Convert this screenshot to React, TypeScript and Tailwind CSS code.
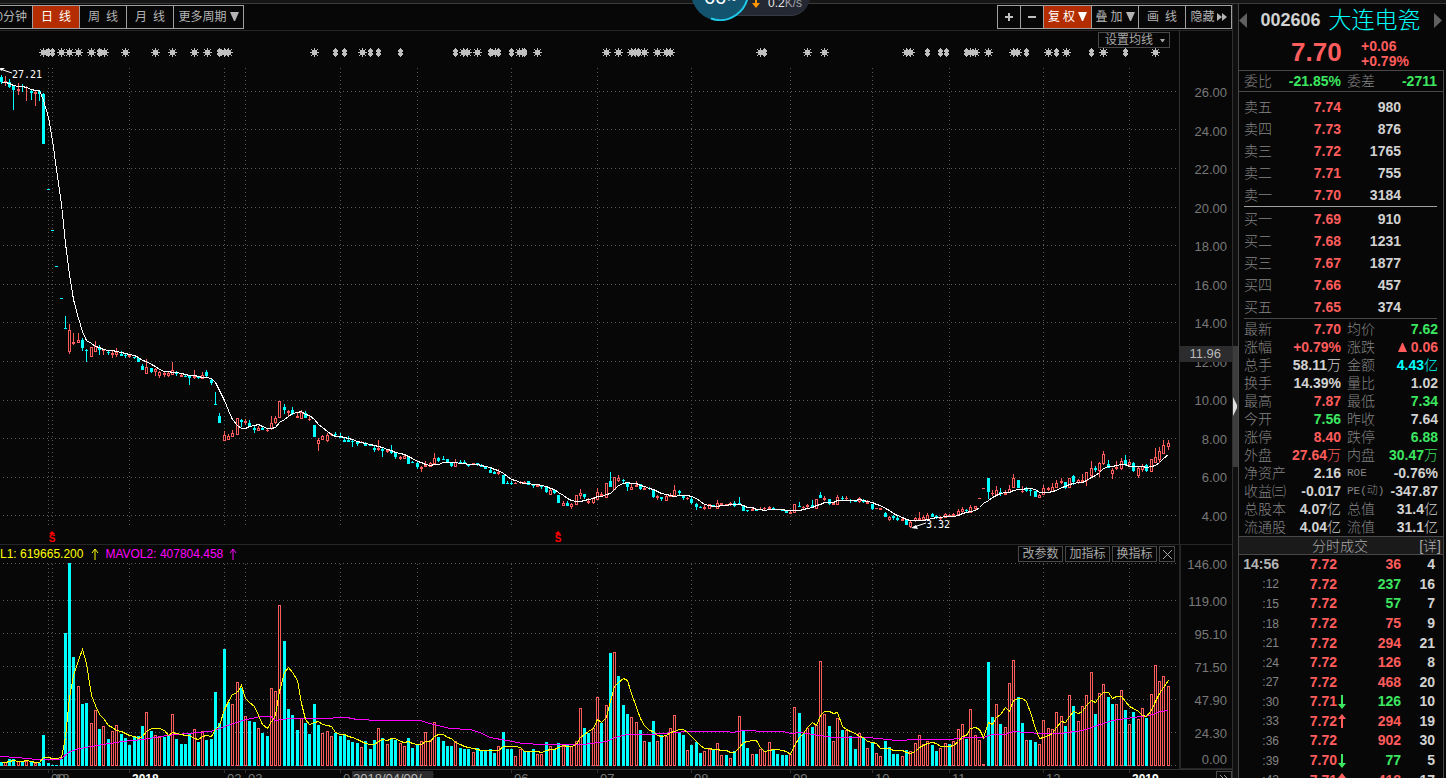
import { ReactNode } from 'react';
import clsx from 'clsx';

// one record per trading day: kind high top bottom low volume
// c = down day, r = up day, d = flat dash
// m = up candle with a down-coloured volume bar, n = the other way round
const RAW = `
c 75 77 82 84 4|r 76 81 82 86 4|c 79 82 87 88 7|c 86 86 90 110 7|r 83 89 91 95 5|c 84 86 87 92 4|r 86 87 88 101 5|c 90 91 93 100 4|r 91 92 94 106 3|c 91 91 94 101 3
c 93 94 144 144 31|c 189 189 189 189 3|c 230 230 230 230 1|c 266 266 266 266 1|c 298 298 298 298 7|c 316 328 329 329 133|m 324 330 352 354 203|m 333 342 344 345 109|r 333 340 343 343 80|c 338 340 348 351 62
c 349 350 351 362 63|r 347 347 357 357 43|r 341 346 352 352 56|c 345 347 350 355 37|r 349 350 351 355 40|c 350 352 353 355 27|r 350 353 355 358 35|r 348 352 355 357 41|c 351 354 356 356 32|c 353 355 356 358 28
m 355 355 357 358 21|c 357 357 358 359 30|c 357 358 362 362 30|c 364 366 370 370 40|r 359 367 374 374 54|c 368 368 372 373 35|r 368 369 372 376 31|r 371 372 376 378 29|m 372 373 375 377 29|m 371 373 376 377 30
r 362 370 375 375 52|c 371 372 374 376 27|m 373 375 377 377 22|c 374 376 377 377 22|c 376 376 378 385 32|r 370 376 378 379 37|c 376 377 378 379 24|r 372 375 379 379 35|c 370 372 376 377 26|c 378 380 383 385 27
c 392 404 405 405 74|c 413 416 423 423 43|m 431 435 441 441 117|m 434 436 440 440 64|r 430 433 437 437 62|r 418 418 435 435 84|c 419 420 422 427 78|r 419 421 423 425 50|c 420 423 426 426 45|c 426 428 430 433 44
r 426 428 431 431 38|c 426 428 430 430 33|m 428 430 431 432 30|r 416 423 429 430 78|r 416 418 423 424 75|r 401 401 418 418 161|c 404 407 410 414 125|m 410 411 413 416 57|c 407 410 414 415 51|m 412 416 418 418 36
r 410 412 419 419 48|c 411 413 418 418 43|m 416 419 420 421 32|c 425 425 437 437 62|m 438 440 444 451 41|r 435 436 440 440 33|r 433 435 441 442 35|r 433 434 435 436 30|c 432 434 435 436 33|c 433 436 438 438 30
c 437 440 442 442 31|c 436 440 442 442 26|c 439 441 442 447 24|c 441 442 444 446 23|r 441 442 443 443 19|c 442 443 446 446 25|c 444 445 446 446 17|c 446 448 450 452 26|r 440 448 450 451 38|c 447 449 451 457 28
r 449 450 452 453 22|c 445 451 453 454 27|c 452 453 457 459 26|r 456 457 459 460 23|r 454 456 459 459 20|c 456 456 464 464 28|c 461 462 463 463 18|c 462 463 467 469 21|r 466 467 469 472 25|r 461 465 467 467 34
r 462 463 467 467 26|r 453 458 464 464 44|c 457 458 461 462 29|c 456 459 460 460 25|c 459 459 463 463 20|c 462 463 466 467 20|r 459 462 467 467 25|c 460 462 464 464 18|c 460 462 464 464 17|c 464 464 466 467 17
r 463 463 465 465 14|c 463 463 465 466 18|c 464 465 467 467 16|c 467 467 469 469 16|c 468 470 473 473 17|c 471 472 474 474 13|r 469 472 474 475 20|c 475 475 484 484 34|c 481 483 484 484 17|c 481 483 484 485 17
r 482 483 484 484 10|r 481 482 483 484 17|m 481 482 483 483 15|c 481 481 485 485 14|c 485 485 486 488 17|r 485 485 487 487 12|n 486 486 487 489 12|c 486 487 492 493 24|r 488 490 495 495 20|c 489 490 493 494 17
c 495 495 503 503 23|r 501 503 506 506 20|c 501 503 506 506 21|r 503 504 507 509 20|r 495 495 505 505 25|r 489 493 496 499 58|c 494 494 497 499 38|m 498 501 503 504 33|r 497 498 503 504 38|r 488 492 500 500 69
m 492 494 496 496 43|r 483 483 498 498 61|c 472 481 487 487 113|r 477 477 490 490 114|m 475 478 481 482 90|c 479 480 481 484 61|c 482 483 487 491 52|r 483 487 490 490 49|r 481 485 487 487 44|c 484 484 489 490 36
r 487 488 490 490 25|c 487 488 489 490 24|c 489 489 497 498 45|r 495 496 498 500 25|c 497 497 499 501 31|r 494 496 501 501 30|r 493 495 497 497 38|r 485 490 496 496 51|c 490 491 493 495 33|c 495 496 498 500 31
r 497 498 499 500 16|c 497 499 503 504 21|c 503 504 507 510 24|c 506 507 508 508 13|r 505 507 509 510 15|r 504 504 509 509 17|c 505 505 507 507 16|r 500 503 509 509 23|r 503 503 505 505 11|m 504 504 505 505 11
r 502 503 505 506 8|c 501 503 506 507 15|n 497 503 504 505 50|c 506 506 511 511 36|c 510 510 511 512 18|r 508 509 511 511 12|c 509 509 511 511 12|r 507 509 510 510 17|r 507 508 509 510 15|r 506 507 509 509 24
c 507 508 509 509 16|c 509 509 510 510 12|c 510 510 511 511 11|c 511 511 513 513 11|r 511 512 514 514 12|r 504 504 513 513 59|c 502 506 507 507 53|m 506 507 508 509 32|r 504 505 507 508 38|c 500 505 507 507 39
r 499 499 509 509 41|n 492 495 498 498 105|r 496 498 500 501 52|c 499 499 504 505 40|r 502 503 505 505 25|r 495 497 505 505 48|c 496 498 499 500 36|r 496 498 499 500 36|c 499 500 501 503 30|c 500 501 502 502 17
r 497 498 502 503 33|c 499 500 502 503 28|r 500 502 504 504 18|c 504 504 509 510 23|r 508 508 509 509 13|r 508 508 510 510 10|c 512 513 517 517 25|m 516 517 520 521 19|c 515 516 518 520 12|c 516 518 520 521 12
r 518 519 521 521 10|c 519 520 525 525 16|r 521 522 527 528 15|r 517 518 521 522 23|r 512 518 520 520 31|r 515 517 520 520 22|r 513 515 520 521 25|c 513 514 517 517 21|c 515 516 518 519 15|r 516 517 519 520 18
r 513 514 518 518 23|m 514 515 516 517 22|r 513 514 516 516 25|r 509 511 515 515 37|r 507 509 512 514 42|c 509 510 511 512 27|r 505 507 513 513 57|r 506 506 509 510 31|d 498 498 498 498 26|d 488 488 488 488 2
c 478 478 492 499 104|m 490 493 494 496 49|r 486 490 495 495 62|c 488 492 494 496 42|r 490 493 495 495 39|r 485 489 493 493 83|r 474 478 488 488 106|c 480 480 488 488 69|m 486 491 492 493 43|n 487 489 491 492 26
c 488 490 491 496 26|c 491 491 497 497 24|r 494 495 498 498 22|r 485 488 495 495 46|r 487 488 490 491 38|r 483 487 492 492 37|r 480 483 488 488 54|r 478 481 483 484 50|c 482 482 488 489 40|r 478 478 488 488 71
c 475 476 482 485 60|r 479 480 483 484 45|r 474 480 482 483 60|r 472 472 481 486 71|r 461 468 476 477 94|c 466 468 470 472 52|r 462 463 471 477 73|r 451 454 464 465 82|c 460 464 468 468 69|m 468 470 474 479 62
r 461 467 469 470 62|r 458 461 469 470 76|c 455 460 465 466 56|r 459 462 465 466 42|c 462 463 471 472 54|r 466 468 476 478 47|r 464 466 470 472 58|c 464 465 471 472 48|r 459 459 472 472 72|r 448 457 463 463 101
r 447 451 460 463 85|r 440 445 454 454 90|r 440 443 447 450 80`;

const days = RAW.trim().split(/[\n|]/).map((rec, i) => {
  const [kind, ...n] = rec.split(' ');
  const [high, top, bottom, low, vol] = n.map(Number);
  const up = kind !== 'c' && kind !== 'n';
  return { x: Math.floor(1 + 4.2915 * i), kind, up, high, top, bottom, low, vol, close: up ? top : bottom };
});

function average(values: number[], size: number) {
  return values.map((_, i) => {
    const part = values.slice(Math.max(0, i - size + 1), i + 1);
    return part.reduce((a, b) => a + b, 0) / part.length;
  });
}

const VOL_BASE = 766;
const RED = '#ff5c5c';
const CYAN = '#00ffff';

const priceLine = average(days.map((d) => d.close), 6)
  .map((y, i) => `${days[i].x + 0.5},${Math.round(y) + 0.5}`)
  .join(' ');
const volLine = average(days.map((d) => d.vol), 5)
  .map((v, i) => `${days[i].x + 0.5},${VOL_BASE - Math.round(v) + 0.5}`)
  .join(' ');
const LONG_VOL_LINE =
  '0,756 17,757 37,759 60,759 70,751 80,748 97,745 122,741 143,739 167,735 187,733 210,731 220,728 230,724 243,720 260,716 271,716 275,720 290,718 330,718 337,717 347,717 357,719 380,720 420,720 430,723 450,728 470,729 480,732 490,737 507,740 523,743 543,744 583,744 607,741 615,737 627,734 650,734 687,731 727,731 733,732 742,730 755,730 757,731 783,731 791,733 800,732 813,734 833,737 868,737 897,740 917,739 950,739 967,737 983,737 993,734 1005,734 1013,731 1027,732 1040,733 1060,733 1083,730 1100,724 1113,720 1133,717 1150,715 1160,711 1168,710';

const MONTH_X = [48, 52, 129, 224, 245, 340, 417, 511, 597, 691, 790, 872, 949, 1043, 1129];
const PRICE_Y = [91, 129, 168, 207, 245, 284, 322, 361, 400, 438, 477, 515];
const VOLUME_Y = [563, 600, 633, 666, 699, 732, 765];

const STARS = [43, 61, 69, 78, 91, 104, 125, 155, 172, 194, 207, 224, 228, 314, 362, 463, 467, 477, 495, 519, 522, 537, 606, 618, 631, 635, 644, 657, 666, 670, 760, 807, 824, 906, 910, 970, 975, 988, 1013, 1017, 1048, 1066, 1103, 1155];
const PILLS = [48, 52, 99, 219, 335, 344, 370, 378, 400, 455, 490, 498, 511, 524, 638, 764, 927, 940, 946, 966, 1026, 1056, 1091, 1125];

const PRICE_LABELS = ['26.00', '24.00', '22.00', '20.00', '18.00', '16.00', '14.00', '12.00', '10.00', '8.00', '6.00', '4.00'];

const DATES = [
  { x: 51, text: '09' },
  { x: 55, text: '12' },
  { x: 132, text: '2018', year: true },
  { x: 227, text: '02' },
  { x: 248, text: '03' },
  { x: 343, text: '04' },
  { x: 420, text: '05' },
  { x: 514, text: '06' },
  { x: 600, text: '07' },
  { x: 694, text: '08' },
  { x: 793, text: '09' },
  { x: 875, text: '10' },
  { x: 952, text: '11' },
  { x: 1046, text: '12' },
  { x: 1132, text: '2019', year: true },
];

const SELLS = [
  ['卖五', '7.74', '980'],
  ['卖四', '7.73', '876'],
  ['卖三', '7.72', '1765'],
  ['卖二', '7.71', '755'],
  ['卖一', '7.70', '3184'],
];
const BUYS = [
  ['买一', '7.69', '910'],
  ['买二', '7.68', '1231'],
  ['买三', '7.67', '1877'],
  ['买四', '7.66', '457'],
  ['买五', '7.65', '374'],
];

type Tone = 'r' | 'g' | 'w' | 'c';
const TONES: Record<Tone, string> = {
  r: 'text-[#ff5c5c]',
  g: 'text-[#3ce660]',
  w: 'text-[#d2d2d2]',
  c: 'text-[#00ffff]',
};

const DETAILS: [string, string, Tone, string, string, Tone][] = [
  ['最新', '7.70', 'r', '均价', '7.62', 'g'],
  ['涨幅', '+0.79%', 'r', '涨跌', '▲0.06', 'r'],
  ['总手', '58.11万', 'w', '金额', '4.43亿', 'c'],
  ['换手', '14.39%', 'w', '量比', '1.02', 'w'],
  ['最高', '7.87', 'r', '最低', '7.34', 'g'],
  ['今开', '7.56', 'g', '昨收', '7.64', 'w'],
  ['涨停', '8.40', 'r', '跌停', '6.88', 'g'],
  ['外盘', '27.64万', 'r', '内盘', '30.47万', 'g'],
  ['净资产', '2.16', 'w', 'ROE', '-0.76%', 'w'],
  ['收益㈢', '-0.017', 'w', 'PE(动)', '-347.87', 'w'],
  ['总股本', '4.07亿', 'w', '总值', '31.4亿', 'w'],
  ['流通股', '4.04亿', 'w', '流值', '31.1亿', 'w'],
];

const TICKS: [string, string, '' | 'up' | 'down', string, Tone, string][] = [
  ['14:56', '7.72', '', '36', 'r', '4'],
  [':12', '7.72', '', '237', 'g', '16'],
  [':15', '7.72', '', '57', 'g', '7'],
  [':18', '7.72', '', '75', 'r', '9'],
  [':21', '7.72', '', '294', 'r', '21'],
  [':24', '7.72', '', '126', 'r', '8'],
  [':27', '7.72', '', '468', 'r', '20'],
  [':30', '7.71', 'down', '126', 'g', '10'],
  [':33', '7.72', 'up', '294', 'r', '19'],
  [':36', '7.72', '', '902', 'r', '30'],
  [':39', '7.70', 'down', '77', 'g', '5'],
  [':42', '7.71', 'up', '418', 'r', '17'],
];

function ToolButton({ children, className, active }: { children: ReactNode; className: string; active?: boolean }) {
  return (
    <button
      className={clsx(
        '-ml-px flex h-6 shrink-0 items-center border border-[#a0a0a0] text-xs whitespace-nowrap',
        active ? 'bg-[#b32d00] text-white' : 'text-[#b4b4b4]',
        className
      )}
    >
      {children}
    </button>
  );
}

function Caret() {
  return (
    <svg width="9" height="10" viewBox="0 0 9 10" fill="currentColor" aria-hidden="true">
      <path d="M0 0h9L5 9H4z" />
    </svg>
  );
}

function Toolbar() {
  return (
    <div className="flex h-[27px] shrink-0 justify-between border-b border-[#262626] pt-px">
      <div className="flex">
        <ToolButton className="w-[34px] justify-end pr-[5px]">0分钟</ToolButton>
        <ToolButton className="w-12 justify-center gap-[6px]" active><span>日</span><span>线</span></ToolButton>
        <ToolButton className="w-12 justify-center gap-[6px]"><span>周</span><span>线</span></ToolButton>
        <ToolButton className="w-12 justify-center gap-[6px]"><span>月</span><span>线</span></ToolButton>
        <ToolButton className="w-[71px] justify-center gap-[3px]">更多周期<Caret /></ToolButton>
      </div>
      <div className="flex">
        <ToolButton className="w-6 justify-center">
          <svg width="8" height="8" viewBox="0 0 8 8" aria-label="放大"><path d="M3 0h2v3h3v2H5v3H3V5H0V3h3z" fill="#c0c0c0" /></svg>
        </ToolButton>
        <ToolButton className="w-6 justify-center">
          <svg width="8" height="8" viewBox="0 0 8 8" aria-label="缩小"><path d="M0 3h8v2H0z" fill="#c0c0c0" /></svg>
        </ToolButton>
        <ToolButton className="w-[49px] justify-center gap-[3px]" active><span>复</span><span>权</span><Caret /></ToolButton>
        <ToolButton className="w-12 justify-center gap-[3px]"><span>叠</span><span>加</span><Caret /></ToolButton>
        <ToolButton className="w-12 justify-center gap-[6px]"><span>画</span><span>线</span></ToolButton>
        <ToolButton className="w-[47px] justify-center gap-[2px]">
          隐藏
          <svg width="10" height="8" viewBox="0 0 10 8" fill="currentColor" aria-hidden="true"><path d="M0 0l5 4-5 4zM5 0l5 4-5 4z" /></svg>
        </ToolButton>
      </div>
    </div>
  );
}

function Grid({ rows, top, bottom }: { rows: number[]; top: number; bottom: number }) {
  return (
    <g stroke="#585858" strokeDasharray="1 3" shapeRendering="crispEdges">
      {rows.map((y) => <line key={y} x1="3" x2="1179" y1={y + 0.5} y2={y + 0.5} />)}
      {MONTH_X.map((x) => <line key={x} x1={x + 0.5} x2={x + 0.5} y1={top} y2={bottom} />)}
    </g>
  );
}

function BuyMark({ x }: { x: number }) {
  return (
    <g fill="#ff0000">
      <path d={`M${x - 3} 534l3-3 3 3z`} />
      <text x={x} y="542" textAnchor="middle" className="text-[10px] font-bold">S</text>
    </g>
  );
}

function PriceChart() {
  return (
    <svg viewBox="0 31 1179 513" className="block w-full" role="img" aria-label="日K线">
      <Grid rows={PRICE_Y} top={68} bottom={526} />
      <g fill="#c0c0c0" stroke="#c0c0c0" shapeRendering="crispEdges">
        {STARS.map((x) => (
          <g key={x}>
            <rect x={x - 2} y="50" width="5" height="5" stroke="none" />
            <path d={`M${x - 4} 52.5h9M${x + 0.5} 48v9`} />
            <path d={`M${x - 3} 49h1v1h-1zM${x + 3} 49h1v1h-1zM${x - 3} 55h1v1h-1zM${x + 3} 55h1v1h-1z`} stroke="none" />
          </g>
        ))}
        {PILLS.map((x) => (
          <path key={x} d={`M${x} 48h1v1h1v1h1v2h-1v1h1v2h-1v1h-1v1h-1v-1h-1v-1h-1v-2h1v-1h-1v-2h1v-1h1z`} stroke="none" />
        ))}
      </g>
      <g shapeRendering="crispEdges">
        {days.map((d) => {
          const color = d.up ? RED : CYAN;
          const flat = d.bottom - d.top < 3;
          return (
            <g key={d.x} fill={color}>
              {d.high < d.top && <rect x={d.x} y={d.high} width="1" height={d.top - d.high} />}
              {d.low > d.bottom && <rect x={d.x} y={d.bottom} width="1" height={d.low - d.bottom} />}
              {d.up && !flat ? (
                <rect x={d.x - 0.5} y={d.top + 0.5} width="2" height={d.bottom - d.top - 1} fill="#070707" stroke={color} />
              ) : (
                <rect x={d.x - 1} y={d.top} width="3" height={Math.max(1, d.bottom - d.top)} />
              )}
            </g>
          );
        })}
      </g>
      <polyline points={priceLine} fill="none" stroke="#fff" shapeRendering="crispEdges" />
      <g stroke="#fff" fill="#fff">
        <path d="M0 69l12 4" fill="none" />
        <path d="M0 68h5l-4 3z" stroke="none" />
        <path d="M914 527l12-4" fill="none" />
        <path d="M911 528l5-3 2 4z" stroke="none" />
      </g>
      <g fill="#fff" className="font-['DejaVu_Sans_Mono',monospace] text-[10px]">
        <text x="12" y="78">27.21</text>
        <text x="926" y="528">3.32</text>
      </g>
      <BuyMark x={52} />
      <BuyMark x={558} />
    </svg>
  );
}

function VolumeChart() {
  return (
    <svg viewBox="0 562 1179 204" className="block w-full" role="img" aria-label="成交量">
      <Grid rows={VOLUME_Y} top={564} bottom={766} />
      <g shapeRendering="crispEdges">
        {days.map((d) =>
          d.kind === 'c' || d.kind === 'm' ? (
            <rect key={d.x} x={d.x - 1} y={VOL_BASE - d.vol} width="3" height={d.vol} fill={CYAN} />
          ) : (
            <rect key={d.x} x={d.x - 0.5} y={VOL_BASE - d.vol + 0.5} width="2" height={d.vol - 1} fill="#070707" stroke={RED} />
          )
        )}
      </g>
      <g fill="none" shapeRendering="crispEdges">
        <polyline points={LONG_VOL_LINE} stroke="#ff00ff" transform="translate(0 .5)" />
        <polyline points={volLine} stroke="#ffff00" />
      </g>
    </svg>
  );
}

function UpArrow() {
  return (
    <svg width="8" height="12" viewBox="0 0 8 12" fill="none" stroke="currentColor" aria-hidden="true">
      <path d="M4 12V1M1 5l3-4 3 4" />
    </svg>
  );
}

function SmallButton({ children, className }: { children: ReactNode; className: string }) {
  return (
    <button className={clsx('flex h-4 items-center justify-center border border-[#484848] text-xs leading-[14px] text-[#a8a8a8]', className)}>
      {children}
    </button>
  );
}

function Charts() {
  return (
    <section className="flex min-w-0 flex-1 flex-col border-r border-[#303030]">
      <Toolbar />
      <div className="flex shrink-0">
        <div className="relative min-w-0 flex-1">
          <PriceChart />
          <button className="absolute top-px right-[9px] flex h-4 w-[72px] items-center justify-between border border-[#484848] bg-[#070707] pr-1 pl-[6px] text-xs leading-[14px] text-[#a8a8a8]">
            设置均线
            <svg width="5" height="3" viewBox="0 0 5 3" fill="currentColor" aria-hidden="true"><path d="M0 0h5L3 3H2z" /></svg>
          </button>
        </div>
        <div className="relative w-[53px] border-l border-[#303030] pt-[54px] pr-[5px] text-right text-[13px] leading-4 text-[#787878]">
          <div className="flex h-[440px] flex-col justify-between">
            {PRICE_LABELS.map((t) => <div key={t}>{t}</div>)}
          </div>
          <div className="absolute inset-x-0 top-[315px] h-4 bg-[#2c2c2e] pr-[11px] text-[#b8b8b8]">11.96</div>
        </div>
      </div>

      <div className="flex shrink-0 border-t border-[#262626]">
        <div className="min-w-0 flex-1">
          <div className="flex h-[17px] justify-between">
            <div className="flex items-center text-xs whitespace-nowrap">
              <span className="text-[#ffff00]">L1: 619665.200</span>
              <span className="ml-2 text-[#ffff00]"><UpArrow /></span>
              <span className="ml-[6px] text-[#ff00ff]">MAVOL2: 407804.458</span>
              <span className="ml-[6px] text-[#ff00ff]"><UpArrow /></span>
            </div>
            <div className="flex gap-[2px] pt-px pr-1">
              <SmallButton className="w-[45px]">改参数</SmallButton>
              <SmallButton className="w-[45px]">加指标</SmallButton>
              <SmallButton className="w-[45px]">换指标</SmallButton>
              <SmallButton className="w-4">
                <svg width="9" height="9" viewBox="0 0 9 9" stroke="currentColor" aria-label="关闭"><path d="M0 0l9 9M9 0L0 9" /></svg>
              </SmallButton>
            </div>
          </div>
          <VolumeChart />
        </div>
        <div className="w-[53px] border-b border-l-2 border-[#262626] pt-3 pr-[5px] text-right text-[13px] leading-4 text-[#787878]">
          <div className="h-[37px]">146.00</div>
          <div className="h-[33px]">119.00</div>
          <div className="h-[33px]">95.10</div>
          <div className="h-[33px]">71.50</div>
          <div className="h-[33px]">47.90</div>
          <div className="h-[26px]">24.30</div>
          <div>0.00</div>
        </div>
      </div>

      <div className="flex shrink-0 border-t border-[#303030]">
        <div className="relative min-w-0 flex-1">
          <svg viewBox="0 767 1179 20" className="block w-full text-[13px]" role="img" aria-label="日期">
            {MONTH_X.map((x) => <rect key={x} x={x} y="767" width="1" height="3" fill="#303030" />)}
            {DATES.map((d) => (
              <text key={d.x} x={d.x} y="780" fill={d.year ? '#fff' : '#787878'} className={d.year ? 'text-xs font-bold' : ''}>{d.text}</text>
            ))}
          </svg>
          <div className="absolute top-px left-[352px] h-5 w-[81px] bg-[#2c2c2e] pl-px text-[13px] leading-4 whitespace-nowrap text-[#b8b8b8]">2018/04/09/一</div>
        </div>
        <div className="flex w-[53px] justify-end pt-px">
          <button className="flex h-5 w-4 justify-center border border-[#484848] pt-[3px] text-[#a0a0a0]" aria-label="更多">
            <svg width="9" height="8" viewBox="0 0 9 8" fill="none" stroke="currentColor"><path d="M0 0l4 4-4 4M4 0l4 4-4 4" /></svg>
          </button>
        </div>
      </div>
    </section>
  );
}

// digits stay bold, a trailing 万 / 亿 is drawn in the light weight
function Figure({ text }: { text: string }) {
  const unit = /[万亿]$/.test(text) ? text.slice(-1) : '';
  const arrow = text.startsWith('▲');
  const body = text.slice(arrow ? 1 : 0, unit ? -1 : undefined);
  return (
    <span className="font-bold">
      {arrow && (
        <svg width="9" height="9" viewBox="0 0 9 9" fill="currentColor" className="mr-1 inline-block align-baseline" aria-hidden="true"><path d="M4 0h1l4 9H0z" /></svg>
      )}
      {body}
      {unit && <span className="font-light">{unit}</span>}
    </span>
  );
}

function BookRows({ rows }: { rows: string[][] }) {
  return (
    <table className="w-full table-fixed text-sm leading-[22px]">
      <tbody>
        {rows.map(([label, price, qty]) => (
          <tr key={label} className="h-[22px]">
            <th scope="row" className="w-10 p-0 text-left font-light text-[#848484]">{label}</th>
            <td className="w-[57px] p-0 text-right font-bold text-[#ff5c5c]">{price}</td>
            <td className="p-0 pr-9 text-right font-bold text-[#d2d2d2]">{qty}</td>
          </tr>
        ))}
      </tbody>
    </table>
  );
}

function TickArrow({ dir }: { dir: 'up' | 'down' }) {
  return (
    <svg width="8" height="14" viewBox="0 0 8 14" fill="currentColor" className={dir === 'up' ? 'text-[#ff5c5c]' : 'text-[#3ce660]'} aria-hidden="true">
      <path d={dir === 'up' ? 'M4 0l4 5H5v9H3V5H0z' : 'M4 14l4-5H5V0H3v9H0z'} />
    </svg>
  );
}

function Quote() {
  return (
    <aside className="flex w-[208px] shrink-0 flex-col border-l border-[#484848]">
      <header className="h-[66px] shrink-0">
        <div className="flex h-8 items-center justify-between pr-1">
          <button aria-label="上一只"><svg width="8" height="15" viewBox="0 0 8 15" fill="#606060"><path d="M8 0v15L0 7.500z" /></svg></button>
          <h1 className="flex items-center gap-2 whitespace-nowrap">
            <span className="text-lg font-bold text-[#d2d2d2]">002606</span>
            <span className="text-[23px] leading-8 font-light text-[#00ffff]">大连电瓷</span>
          </h1>
          <button aria-label="下一只"><svg width="8" height="15" viewBox="0 0 8 15" fill="#606060"><path d="M0 0v15l8-7.500z" /></svg></button>
        </div>
        <div className="flex pl-[52px] text-[#ff5c5c]">
          <span className="w-[70px] text-[26px] leading-8 font-bold">7.70</span>
          <span className="flex flex-col pt-[3px] text-sm leading-[15px] font-bold">
            <span>+0.06</span>
            <span>+0.79%</span>
          </span>
        </div>
      </header>

      <div className="mr-[2px] flex flex-1 flex-col border-r border-[#484848]">
        <div className="flex h-[22px] shrink-0 items-center border-y border-[#484848] pr-[6px] pl-[5px] text-sm">
          <span className="w-10 font-light text-[#848484]">委比</span>
          <span className="w-[57px] text-right font-bold text-[#3ce660]">-21.85%</span>
          <span className="pl-[6px] font-light text-[#848484]">委差</span>
          <span className="flex-1 text-right font-bold text-[#3ce660]">-2711</span>
        </div>

        <div className="mr-[6px] ml-[5px] shrink-0 border-b border-[#484848] pt-1">
          <div className="border-b border-[#a0a0a0]"><BookRows rows={SELLS} /></div>
          <div className="pt-px"><BookRows rows={BUYS} /></div>
        </div>

        <div className="mt-px mr-[5px] ml-[5px] shrink-0">
          <table className="w-full table-fixed text-sm leading-[18px]">
            <tbody>
              {DETAILS.map(([l1, v1, t1, l2, v2, t2]) => (
                <tr key={l1} className="h-[18px]">
                  <th scope="row" className="w-[42px] p-0 text-left font-light whitespace-nowrap text-[#848484]">{l1}</th>
                  <td className={clsx('w-[55px] p-0 text-right whitespace-nowrap', TONES[t1])}><Figure text={v1} /></td>
                  <th scope="row" className={clsx('w-[43px] p-0 pl-[6px] text-left font-light whitespace-nowrap text-[#848484]', /^[A-Z]/.test(l2) && "font-['Liberation_Mono','Noto_Sans_CJK_SC',monospace] text-[11px]")}>{l2}</th>
                  <td className={clsx('p-0 text-right whitespace-nowrap', TONES[t2])}><Figure text={v2} /></td>
                </tr>
              ))}
            </tbody>
          </table>
        </div>

        <div className="flex h-[19px] shrink-0 items-center border-y border-[#484848] bg-[#1a1a1a] pr-[2px] text-sm text-[#a8a8a8]">
          <span className="flex-1 pl-[22px] text-center font-light">分时成交</span>
          <button className="font-light">[详]</button>
        </div>

        <table className="h-[235px] w-full table-fixed text-sm leading-[19px] font-bold">
          <tbody>
            {TICKS.map(([time, price, dir, vol, tone, count], i) => (
              <tr key={time}>
                <td className={clsx('w-10 p-0 text-right', i === 0 ? 'text-[#b4b4b4]' : 'text-xs font-light text-[#848484]')}>{time}</td>
                <td className="w-[58px] p-0 text-right text-[#ff5c5c]">{price}</td>
                <td className="w-[10px] p-0 pl-px">{dir && <TickArrow dir={dir} />}</td>
                <td className={clsx('w-[54px] p-0 text-right', TONES[tone])}>{vol}</td>
                <td className="p-0 pr-2 text-right text-[#d2d2d2]">{count}</td>
              </tr>
            ))}
          </tbody>
        </table>
      </div>
    </aside>
  );
}

function SpeedBadge() {
  return (
    <div className="absolute -top-[37px] left-[691px] h-[58px] w-[119px]" aria-label="网速">
      <div className="absolute top-[30px] right-0 h-[23px] w-[92px] rounded-b-[20px] border-b border-[#363a44] bg-[#242832]">
        <div className="flex items-center gap-2 pt-[2px] pl-[34px] text-xs leading-4 whitespace-nowrap text-[#e8e8e8]">
          <svg width="8" height="10" viewBox="0 0 8 10" fill="#ff9500" aria-hidden="true"><path d="M3 0h2v5h3l-4 5-4-5h3z" /></svg>
          <span>0.2<span className="text-[#a0a4ac]">K/s</span></span>
        </div>
      </div>
      <div className="absolute flex h-[58px] w-[58px] items-center justify-center rounded-full bg-[#13536e] pt-[10px] text-white">
        <span className="text-xl leading-6">66</span>
        <span className="text-[11px] leading-6">%</span>
        <svg width="58" height="58" viewBox="0 0 58 58" fill="none" stroke="#1ec8e6" strokeWidth="2" className="absolute inset-0" aria-hidden="true">
          <path d="M57 29A28 28 0 0 1 20 55.500" />
        </svg>
      </div>
    </div>
  );
}

export default function App() {
  return (
    <div className="relative flex h-screen flex-col overflow-hidden bg-[#070707] font-['Liberation_Sans','Noto_Sans_CJK_SC',sans-serif]">
      <div className="h-1 shrink-0 border-b border-[#3a3a3a] bg-[#161616]" />
      <main className="flex min-h-0 flex-1">
        <Charts />
        <div className="relative w-[5px] shrink-0 bg-[#101010]">
          <div className="absolute inset-x-0 top-[342px] flex h-[121px] items-center bg-[#3c3c3c]">
            <svg width="4" height="19" viewBox="0 0 4 19" fill="#e0e0e0" aria-hidden="true"><path d="M0 0l4 8v3l-4 8z" /></svg>
          </div>
        </div>
        <Quote />
      </main>
      <SpeedBadge />
    </div>
  );
}
